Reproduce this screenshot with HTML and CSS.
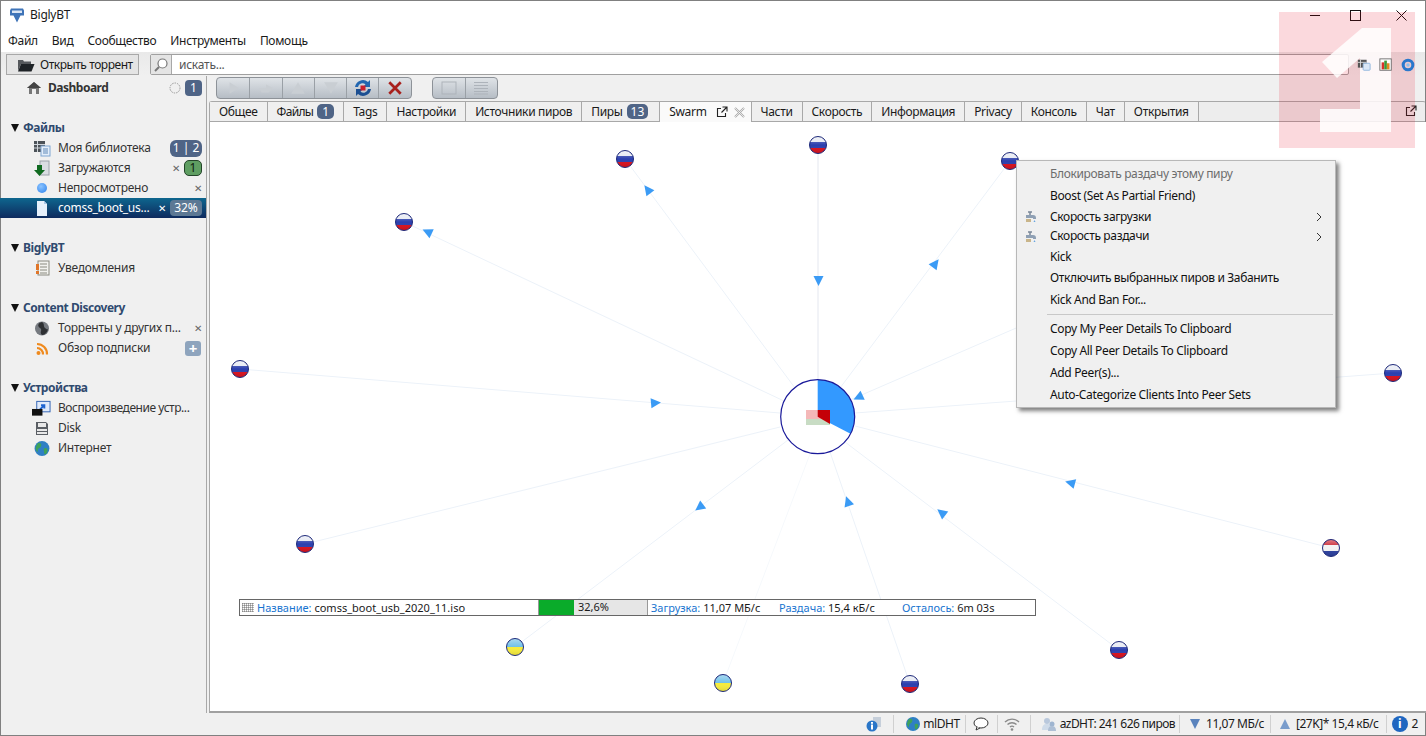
FILE: index.html
```html
<!DOCTYPE html>
<html lang="ru">
<head>
<meta charset="utf-8">
<title>BiglyBT</title>
<link rel="stylesheet" href="styles.css">
</head>
<body>
<svg class="defs" aria-hidden="true">
  <defs>
    <clipPath id="fc"><circle cx="0" cy="0" r="8.5"/></clipPath>
    <linearGradient id="gloss" x1="0" y1="0" x2="0" y2="1"><stop offset="0" stop-color="#fff" stop-opacity=".45"/><stop offset=".5" stop-color="#fff" stop-opacity="0"/><stop offset="1" stop-color="#000" stop-opacity=".12"/></linearGradient>
    <symbol id="ru" viewBox="-10 -10 20 20" overflow="visible">
      <g clip-path="url(#fc)">
        <rect x="-9" y="-9" width="18" height="6" fill="#e4e8f2"/>
        <rect x="-9" y="-3" width="18" height="6" fill="#2b3fae"/>
        <rect x="-9" y="3" width="18" height="6" fill="#d8101c"/>
        <rect x="-9" y="-9" width="18" height="18" fill="url(#gloss)"/>
      </g>
      <circle r="8.5" fill="none" stroke="#1f2a7a" stroke-width="1"/>
    </symbol>
    <symbol id="nl" viewBox="-10 -10 20 20" overflow="visible">
      <g clip-path="url(#fc)">
        <rect x="-9" y="-9" width="18" height="6" fill="#c8202c"/>
        <rect x="-9" y="-3" width="18" height="6" fill="#f2f2f2"/>
        <rect x="-9" y="3" width="18" height="6" fill="#2a3f9e"/>
        <rect x="-9" y="-9" width="18" height="18" fill="url(#gloss)"/>
      </g>
      <circle r="8.5" fill="none" stroke="#1f2a7a" stroke-width="1"/>
    </symbol>
    <symbol id="ua" viewBox="-10 -10 20 20" overflow="visible">
      <g clip-path="url(#fc)">
        <rect x="-9" y="-9" width="18" height="9" fill="#6fc0e8"/>
        <rect x="-9" y="0" width="18" height="9" fill="#f6ec3c"/>
        <rect x="-9" y="-9" width="18" height="18" fill="url(#gloss)"/>
      </g>
      <circle r="8.5" fill="none" stroke="#1f2a7a" stroke-width="1"/>
    </symbol>
    <polygon id="arr" points="0,-6 5,4 -5,4" fill="#3b9bf5"/>
    <symbol id="ext" viewBox="0 0 12 12">
      <path d="M5 2.500H1.500v8h8V7M6.500 1h4.500v4.500M11 1L5.500 6.500" fill="none" stroke="#222" stroke-width="1.100"/>
    </symbol>
    <symbol id="faucet" viewBox="0 0 14 14">
      <path d="M1 6h7a3 3 0 0 1 3 3v1H8V9H1z" fill="#8fa0b4"/>
      <path d="M3 3h4M5 3v3" stroke="#7a8798" stroke-width="1.500"/>
      <path d="M9.500 11l-1 2h2z" fill="#6aa6e0"/>
      <rect x="1" y="10" width="5" height="3" fill="#c9b58a"/>
    </symbol>
    <symbol id="earth" viewBox="0 0 16 16">
      <circle cx="8" cy="8" r="7" fill="#2f7fc4"/>
      <path d="M4 3c3-1 4 1 3 3s-3 1-3 4-2-1-2-2 1-4 2-5zM10 8c2-1 4 0 3 3s-3 3-3 1-1-3 0-4z" fill="#3fa25a"/>
    </symbol>
  </defs>
</svg>

<div class="window">
  <header class="titlebar">
    <svg class="app-logo" viewBox="0 0 16 16"><path d="M2 1h12l1 2v5h-3.500L8 15 4.500 8H1V3z" fill="#3f74b8"/><rect x="3" y="3" width="10" height="2.500" fill="#dbe6f4"/></svg>
    <span class="app-title">BiglyBT</span>
    <div class="winctl">
      <span class="wc-min"></span>
      <span class="wc-max"></span>
      <svg class="wc-close" viewBox="0 0 11 11"><path d="M.5.5l10 10M10.500.5l-10 10" stroke="#111" stroke-width="1"/></svg>
    </div>
  </header>

  <nav class="menubar">
    <span>Файл</span><span>Вид</span><span>Сообщество</span><span>Инструменты</span><span>Помощь</span>
  </nav>

  <div class="toolbar">
    <button class="open-btn">
      <svg viewBox="0 0 18 14" class="folder"><path d="M1 2h5l1 1.500h7V6H4L1 13z" fill="#55585c"/><path d="M4 6h13.500L14.500 13.500H1z" fill="#1e2226"/></svg>
      Открыть торрент
    </button>
    <div class="search">
      <span class="search-ico"><svg viewBox="0 0 16 16"><circle cx="9.500" cy="6.500" r="4.500" fill="#fff" stroke="#777" stroke-width="1.200"/><path d="M6 10l-4 4" stroke="#777" stroke-width="2"/></svg></span>
      <span class="search-text">искать...</span>
    </div>
    <div class="tb-icons">
      <svg viewBox="0 0 16 16"><rect x="1" y="2" width="10" height="9" fill="#555"/><path d="M1 5h10M4 2v9" stroke="#ddd"/><rect x="7" y="6" width="8" height="8" rx="1" fill="#dbe8f6" stroke="#8db4dc"/></svg>
      <svg viewBox="0 0 16 16"><rect x="1" y="1" width="13" height="13" fill="#fff" stroke="#666"/><rect x="3" y="5" width="3" height="8" fill="#d8322a"/><rect x="6" y="3" width="3" height="10" fill="#3a9a3a"/><rect x="9" y="6" width="3" height="7" fill="#e08a20"/></svg>
      <svg viewBox="0 0 16 16"><circle cx="8" cy="8" r="5.500" fill="none" stroke="#2a78cc" stroke-width="3.500"/><circle cx="8" cy="8" r="2" fill="#8cc0ee"/></svg>
    </div>
  </div>

  <div class="content">
    <aside class="sidebar">
      <div class="row dash">
        <svg class="ico-dash" viewBox="0 0 14 14"><path d="M7 1L0 7h2v6h10V7h2z" fill="#777"/><path d="M7 1L0 7h14z" fill="#444"/><rect x="5" y="8" width="4" height="5" fill="#eee"/></svg>
        <span class="dash-label">Dashboard</span>
        <span class="right">
          <svg class="spin" viewBox="0 0 12 12"><circle cx="6" cy="6" r="5" fill="none" stroke="#999" stroke-dasharray="1.500 1"/></svg>
          <span class="badge">1</span>
        </span>
      </div>

      <div class="group">
        <div class="heading"><span class="tri"></span>Файлы</div>
        <div class="row item">
          <svg class="ico" viewBox="0 0 18 17"><rect x="1" y="1" width="11" height="11" fill="#4c5258"/><path d="M1 4.500h11M1 8h11M4.500 1v11" stroke="#cfd4da"/><rect x="8" y="6" width="9" height="10" fill="#e4eefa" stroke="#7ea6d2"/><path d="M10 9h5M10 11h5M10 13h5" stroke="#5f89b8"/></svg>
          <span>Моя библиотека</span>
          <span class="right"><span class="badge wide">1 | 2</span></span>
        </div>
        <div class="row item">
          <svg class="ico" viewBox="0 0 18 17"><rect x="7" y="1" width="9" height="14" fill="#d9dde2" stroke="#9aa2aa"/><path d="M4 5h5v5h3l-5.500 6L1 10h3z" fill="#106a20"/></svg>
          <span>Загружаются</span>
          <span class="right"><span class="x">✕</span><span class="badge green">1</span></span>
        </div>
        <div class="row item">
          <span class="ico-box"><span class="dot"></span></span>
          <span>Непросмотрено</span>
          <span class="right"><span class="x">✕</span></span>
        </div>
        <div class="row item selected">
          <svg class="ico" viewBox="0 0 18 17"><path d="M4 1h7l3 3v12H4z" fill="#e6f0fb"/><path d="M11 1v3h3z" fill="#aac8e8"/></svg>
          <span>comss_boot_us...</span>
          <span class="right"><span class="x">✕</span><span class="badge pct">32%</span></span>
        </div>
      </div>

      <div class="group">
        <div class="heading"><span class="tri"></span>BiglyBT</div>
        <div class="row item">
          <svg class="ico" viewBox="0 0 18 17"><rect x="5" y="1" width="11" height="14" fill="#f2f2ee" stroke="#8a8a80"/><path d="M7 4h7M7 7h7M7 10h7M7 13h7" stroke="#8a8a80"/><rect x="3" y="4" width="3" height="6" fill="#e0762a"/><rect x="3" y="11" width="3" height="3" fill="#e0762a"/></svg>
          <span>Уведомления</span>
        </div>
      </div>

      <div class="group">
        <div class="heading"><span class="tri"></span>Content Discovery</div>
        <div class="row item">
          <svg class="ico" viewBox="0 0 18 17"><circle cx="9" cy="8.500" r="7" fill="#767a80"/><path d="M9 2c3 2 1 4 3 6s3 1 3 1-1 6-6 6c-3-3 1-5-2-7S5 3 9 2z" fill="#2e3033"/></svg>
          <span>Торренты у других п...</span>
          <span class="right"><span class="x">✕</span></span>
        </div>
        <div class="row item">
          <svg class="ico" viewBox="0 0 18 17"><circle cx="5.500" cy="13" r="2" fill="#ef8a1e"/><path d="M4 8a6 6 0 0 1 6 6.500M4 4a10 10 0 0 1 10 10.500" fill="none" stroke="#ef8a1e" stroke-width="2.200"/></svg>
          <span>Обзор подписки</span>
          <span class="right"><span class="plus">+</span></span>
        </div>
      </div>

      <div class="group">
        <div class="heading"><span class="tri"></span>Устройства</div>
        <div class="row item">
          <svg class="ico ico-wide" viewBox="0 0 20 17"><rect x="5" y="1" width="14" height="11" fill="#dfeafb" stroke="#2f62b4"/><path d="M8 10l5-5M9.500 5H13v3.500" stroke="#1d63d0" stroke-width="2" fill="none"/><rect x="0" y="9" width="11" height="7" fill="#111"/></svg>
          <span class="tight">Воспроизведение устр...</span>
        </div>
        <div class="row item">
          <svg class="ico" viewBox="0 0 18 17"><path d="M3 2h10l2 2v11H3z" fill="#5a5e64"/><rect x="5" y="3" width="8" height="4" fill="#e8e8e8"/><rect x="4" y="9" width="10" height="2" fill="#e8e8e8"/><rect x="4" y="12" width="10" height="2" fill="#e8e8e8"/></svg>
          <span>Disk</span>
        </div>
        <div class="row item">
          <svg class="ico" viewBox="0 0 16 16"><use href="#earth"/></svg>
          <span>Интернет</span>
        </div>
      </div>
    </aside>

    <main class="main">
      <div class="actions">
        <div class="btn-group">
          <span class="cell"><svg viewBox="0 0 14 14"><path d="M4 2l8 5-8 5z" fill="#c9ced3"/></svg></span>
          <span class="cell"><svg viewBox="0 0 18 14"><path d="M1 7h8V3l8 4-5 5H4z" fill="#c9ced3"/></svg></span>
          <span class="cell"><svg viewBox="0 0 14 14"><path d="M7 2l6 10H1z" fill="#c9ced3"/></svg></span>
          <span class="cell"><svg viewBox="0 0 14 14"><path d="M7 12l6-10H1z" fill="#c9ced3"/></svg></span>
          <span class="cell"><svg class="big" viewBox="0 0 20 20"><path d="M2 9a8 8 0 0 1 13-5l2-2v7h-7l2.500-2.500A4.500 4.500 0 0 0 5 9z" fill="#2166b0"/><path d="M18 11a8 8 0 0 1-13 5l-2 2v-7h7l-2.500 2.500A4.500 4.500 0 0 0 15 11z" fill="#1c4f92"/><rect x="7.500" y="7.500" width="5" height="5" fill="#c8202c"/></svg></span>
          <span class="cell"><svg viewBox="0 0 14 14"><path d="M2 2l10 10M12 2L2 12" stroke="#a8201c" stroke-width="2.400"/></svg></span>
        </div>
        <div class="btn-group second">
          <span class="cell"><svg viewBox="0 0 16 14"><rect x="1" y="1" width="14" height="12" fill="none" stroke="#adb3ba"/></svg></span>
          <span class="cell"><svg viewBox="0 0 16 14"><path d="M1 1.500h14M1 4.500h14M1 7.500h14M1 10.500h14M1 13h14" stroke="#adb3ba"/></svg></span>
        </div>
      </div>

      <div class="tabs">
        <span class="tab">Общее</span>
        <span class="tab tab-files">Файлы <span class="badge tabbadge">1</span></span>
        <span class="tab">Tags</span>
        <span class="tab">Настройки</span>
        <span class="tab">Источники пиров</span>
        <span class="tab tab-peers">Пиры <span class="badge tabbadge">13</span></span>
        <span class="tab active">Swarm
          <svg class="tab-ext" viewBox="0 0 12 12"><use href="#ext"/></svg>
          <svg class="tab-x" viewBox="0 0 11 11"><path d="M1 1l9 9M10 1l-9 9" stroke="#a8a8a8" stroke-width="2" fill="none"/><path d="M1 1l9 9M10 1l-9 9" stroke="#fff" stroke-width=".7"/></svg>
        </span>
        <span class="tab">Части</span>
        <span class="tab">Скорость</span>
        <span class="tab">Информация</span>
        <span class="tab">Privacy</span>
        <span class="tab">Консоль</span>
        <span class="tab">Чат</span>
        <span class="tab">Открытия</span>
        <svg class="tabs-ext" viewBox="0 0 12 12"><use href="#ext"/></svg>
      </div>

      <div class="canvas">
        <svg class="swarm" viewBox="210 122 1215 589" width="1215" height="589">
          <g stroke="#ecf2f9" stroke-width="1" fill="none">
            <path d="M818 380V145" stroke="#e4e7ef"/>
            <path d="M795 388L625 159"/>
            <path d="M840 388L1010 161"/>
            <path d="M784 401L404 222"/>
            <path d="M780 413L240 369"/>
            <path d="M855 413L1393 373"/>
            <path d="M780 427L305 544"/>
            <path d="M855 426L1331 548"/>
            <path d="M788 440L515 647"/>
            <path d="M810 454L723 683" stroke="#f6f9fc"/>
            <path d="M830 452L910 684"/>
            <path d="M845 442L1119 650"/>
            <path d="M850 400L1030 322"/>
          </g>
          <use href="#arr" transform="translate(648 190) rotate(-37)"/>
          <use href="#arr" transform="translate(818.500 280) rotate(180)"/>
          <use href="#arr" transform="translate(935 264) rotate(37)"/>
          <use href="#arr" transform="translate(428 232) rotate(-65)"/>
          <use href="#arr" transform="translate(655 403) rotate(85)"/>
          <use href="#arr" transform="translate(1071 483) rotate(-75)"/>
          <use href="#arr" transform="translate(700 507) rotate(-127)"/>
          <use href="#arr" transform="translate(848 502) rotate(-19)"/>
          <use href="#arr" transform="translate(942 513) rotate(-52)"/>
          <use href="#arr" transform="translate(859 397) rotate(-115)"/>

          <circle cx="817.700" cy="416.700" r="37" fill="#fff"/>
          <path d="M817.700 416.700V379.700A37 37 0 0 1 850.500 433.800Z" fill="#3399ff"/>
          <circle cx="817.700" cy="416.700" r="37" fill="none" stroke="#1a1a9a" stroke-width="1.200"/>
          <rect x="806" y="410" width="24" height="9" fill="#f4b8b8"/>
          <rect x="806" y="419" width="24" height="6" fill="#c8dcc4"/>
          <path d="M817.700 410H830V424L817.700 416.700Z" fill="#c40008"/>

          <use href="#ru" x="615" y="149" width="20" height="20"/>
          <use href="#ru" x="808" y="135" width="20" height="20"/>
          <use href="#ru" x="1000" y="151" width="20" height="20"/>
          <use href="#ru" x="394" y="212" width="20" height="20"/>
          <use href="#ru" x="230" y="359" width="20" height="20"/>
          <use href="#ru" x="1383" y="363" width="20" height="20"/>
          <use href="#ru" x="295" y="534" width="20" height="20"/>
          <use href="#nl" x="1321" y="538" width="20" height="20"/>
          <use href="#ua" x="505" y="637" width="20" height="20"/>
          <use href="#ua" x="713" y="673" width="20" height="20"/>
          <use href="#ru" x="900" y="674" width="20" height="20"/>
          <use href="#ru" x="1109" y="640" width="20" height="20"/>
        </svg>

        <div class="infobar">
          <span class="grip"></span>
          <span class="ib-name"><b>Название:</b> comss_boot_usb_2020_11.iso</span>
          <span class="ib-prog"><span class="ib-fill"></span><span class="ib-pct">32,6%</span></span>
          <span class="ib-down"><b>Загрузка:</b> 11,07 МБ/с</span>
          <span class="ib-up"><b>Раздача:</b> 15,4 кБ/с</span>
          <span class="ib-eta"><b>Осталось:</b> 6m 03s</span>
        </div>
      </div>
    </main>
  </div>

  <footer class="statusbar">
    <svg class="st-ico" viewBox="0 0 16 16"><rect x="7" y="1" width="8" height="10" fill="#c6cfda"/><circle cx="6" cy="10" r="5.500" fill="#2a76c8"/><rect x="5" y="8.500" width="2" height="5" fill="#fff"/><rect x="5" y="6" width="2" height="1.800" fill="#fff"/></svg>
    <span class="st-sep s1"></span>
    <svg class="st-ico" viewBox="0 0 16 16"><use href="#earth"/></svg>
    <span class="st-text mi-dht">mlDHT</span>
    <span class="st-sep s2"></span>
    <svg class="st-ico" viewBox="0 0 16 16"><ellipse cx="8" cy="7" rx="7" ry="5" fill="#fff" stroke="#333"/><path d="M4 11l-1 3 4-2" fill="#fff" stroke="#333"/></svg>
    <span class="st-sep s3"></span>
    <svg class="st-ico" viewBox="0 0 16 16"><path d="M1 6a10 10 0 0 1 14 0M3.500 8.500a6.500 6.500 0 0 1 9 0M6 11a3 3 0 0 1 4 0" fill="none" stroke="#8a8a8a" stroke-width="1.400"/><circle cx="8" cy="13.500" r="1.300" fill="#8a8a8a"/></svg>
    <span class="st-sep s4"></span>
    <svg class="st-ico" viewBox="0 0 16 16"><circle cx="6" cy="5" r="3" fill="#b9c8dc"/><path d="M1 14c0-5 2-6 5-6s5 1 5 6z" fill="#cfdbe9"/><circle cx="11" cy="8" r="2.500" fill="#9fb5d0"/><path d="M7 15c0-4 2-5 4-5s4 1 4 5z" fill="#aebfd5"/></svg>
    <span class="st-text az">azDHT: 241 626 пиров</span>
    <span class="st-sep s5"></span>
    <svg class="st-tri" viewBox="0 0 10 10"><path d="M0 0h10L5 10z" fill="#5a83bd"/></svg>
    <span class="st-text">11,07 МБ/с</span>
    <span class="st-sep s6"></span>
    <svg class="st-tri" viewBox="0 0 10 10"><path d="M0 10h10L5 0z" fill="#7a9dcc"/></svg>
    <span class="st-text">[27K]* 15,4 кБ/с</span>
    <span class="st-sep s7"></span>
    <span class="st-info">i</span>
    <span class="st-text st-count">2</span>
  </footer>

  <div class="ctx">
    <div class="mi dis">Блокировать раздачу этому пиру</div>
    <div class="mi">Boost (Set As Partial Friend)</div>
    <div class="mi thin"><svg class="mi-ico" viewBox="0 0 14 14"><use href="#faucet"/></svg>Скорость загрузки<svg class="chev" viewBox="0 0 6 10"><path d="M1 1l4 4-4 4" fill="none" stroke="#333"/></svg></div>
    <div class="mi thin"><svg class="mi-ico" viewBox="0 0 14 14"><use href="#faucet"/></svg>Скорость раздачи<svg class="chev" viewBox="0 0 6 10"><path d="M1 1l4 4-4 4" fill="none" stroke="#333"/></svg></div>
    <div class="mi kick">Kick</div>
    <div class="mi">Отключить выбранных пиров и Забанить</div>
    <div class="mi">Kick And Ban For...</div>
    <div class="sep"></div>
    <div class="mi">Copy My Peer Details To Clipboard</div>
    <div class="mi">Copy All Peer Details To Clipboard</div>
    <div class="mi">Add Peer(s)...</div>
    <div class="mi">Auto-Categorize Clients Into Peer Sets</div>
  </div>

  <svg class="watermark" viewBox="0 0 136 136" aria-hidden="true">
    <rect width="136" height="136" fill="#e6001a" fill-opacity=".15"/>
    <path d="M83 16h29v104H41V97h40V46L58 66 43 50z" fill="#fff" fill-opacity=".85"/>
  </svg>
</div>
</body>
</html>
```

FILE: styles.css
```css
* { box-sizing: border-box; }
html, body { margin: 0; padding: 0; height: 100%; overflow: hidden; background: #fff; }
body { font: 12px/16px "Noto Sans", "Open Sans", sans-serif; letter-spacing: -0.25px; color: #1a1a1a; }
.defs { position: absolute; width: 0; height: 0; }

.window { position: relative; width: 1426px; height: 736px; display: flex; flex-direction: column; overflow: hidden; outline: 1px solid #808080; outline-offset: -1px; }

.titlebar { height: 30px; flex: none; display: flex; align-items: center; background: #fff; padding-left: 9px; }
.app-logo { width: 16px; height: 17px; }
.app-title { margin-left: 5px; }
.winctl { margin-left: auto; display: flex; align-items: center; padding-right: 19px; }
.wc-min { width: 10px; height: 1px; background: #111; margin-right: 30px; }
.wc-max { width: 11px; height: 11px; border: 1px solid #111; margin-right: 35px; }
.wc-close { width: 11px; height: 11px; }

.menubar { height: 22px; flex: none; display: flex; align-items: center; gap: 14px; padding-left: 8px; background: #fff; letter-spacing: -0.3px; }

.toolbar { height: 24px; flex: none; display: flex; align-items: stretch; padding: 2px 0 1px 6px; background: linear-gradient(#e9e9e9, #f0f0f0); }
.open-btn { width: 133px; display: flex; align-items: center; gap: 5px; padding: 0 0 0 10px; font: inherit; letter-spacing: -0.45px; color: #1a1a1a; background: #e4e4e4; border: 1px solid #a8a8a8; }
.folder { width: 18px; height: 14px; }
.search { margin-left: 11px; width: 1199px; display: flex; background: #fff; border: 1px solid #a0a0a0; border-radius: 2px; }
.search-ico { width: 21px; display: flex; align-items: center; justify-content: center; background: #e4e4e4; border-right: 1px solid #a8a8a8; }
.search-ico svg { width: 16px; height: 16px; }
.search-text { padding-left: 7px; color: #555; line-height: 20px; }
.tb-icons { display: flex; align-items: center; gap: 8px; margin-left: 8px; position: relative; z-index: 2; }
.tb-icons svg { width: 14px; height: 14px; }

.content { flex: 1; min-height: 0; display: flex; background: #f0f0f0; }

.sidebar { width: 207px; flex: none; padding-top: 2px; background: #f0f0f0; border-right: 1px solid #a8a8a8; color: #333; }
.row { height: 20px; display: flex; align-items: center; position: relative; }
.dash { padding-left: 27px; font-weight: 700; letter-spacing: -0.5px; }
.ico-dash { width: 14px; height: 14px; margin-right: 7px; }
.dash-label { color: #333; }
.right { margin-left: auto; display: flex; align-items: center; gap: 4px; padding-right: 4px; }
.spin { width: 12px; height: 12px; }
.badge { display: inline-flex; align-items: center; justify-content: center; min-width: 17px; height: 16px; padding: 0 4px; border-radius: 4px; background: #4f6486; color: #fff; letter-spacing: 0; font-weight: 400; white-space: nowrap; }
.badge.wide { width: 32px; height: 17px; padding: 0; border-radius: 6px; }
.badge.green { background: #5f9e62; border: 1px solid #24452a; color: #102010; width: 18px; border-radius: 5px; }
.badge.pct { width: 32px; padding: 0; background: #5c7894; border-radius: 4px; }

.group { margin-top: 20px; }
.heading { height: 20px; display: flex; align-items: center; padding-left: 11px; font-weight: 700; color: #2f4a6f; letter-spacing: -0.45px; }
.tri { width: 0; height: 0; margin-right: 4px; border-left: 4px solid transparent; border-right: 4px solid transparent; border-top: 8px solid #111; }
.item { padding-left: 33px; }
.ico { width: 18px; height: 17px; margin-right: 7px; flex: none; }
.ico-wide { width: 19px; margin-left: -1px; }
.tight { letter-spacing: -0.45px; }
.ico-box { width: 18px; height: 17px; margin-right: 7px; display: flex; align-items: center; justify-content: center; flex: none; }
.dot { width: 10px; height: 10px; border-radius: 50%; background: radial-gradient(circle at 40% 35%, #8cc4ff, #2a80ec); }
.x { color: #666; font-size: 10px; line-height: 10px; }
.selected { background: linear-gradient(#0e668e, #0e2a5e); color: #fff; }
.selected .x { color: #fff; }
.plus { width: 16px; height: 15px; margin-right: 1px; display: flex; align-items: center; justify-content: center; border-radius: 3px; background: #8ea4bd; color: #fff; font-weight: 700; font-size: 15px; }

.main { flex: 1; min-width: 0; display: flex; flex-direction: column; padding-left: 2px; }
.actions { height: 25px; flex: none; display: flex; align-items: flex-start; padding: 1px 0 0 7px; gap: 20px; }
.btn-group { display: flex; height: 22px; border: 1px solid #8d9298; border-radius: 4px; background: linear-gradient(#dfe3e7, #b6bdc5); }
.cell { width: 32.300px; display: flex; align-items: center; justify-content: center; border-left: 1px solid #9aa0a6; }
.cell:first-child { border-left: 0; }
.cell svg { width: 16px; height: 16px; }
.cell svg.big { width: 20px; height: 20px; }
.second .cell { width: 32px; }

.tabs { height: 21px; flex: none; display: flex; align-items: stretch; letter-spacing: -0.34px; background: #ededed; border-top: 1px solid #a8a8a8; border-left: 1px solid #a8a8a8; border-bottom: 1px solid #a8a8a8; border-radius: 3px 3px 0 0; }
.tab { display: flex; align-items: center; gap: 4px; padding: 0 9px; border-right: 1px solid #a8a8a8; white-space: nowrap; background: #efefef; }
.tab-files { letter-spacing: -0.7px; }
.tab-peers { padding-right: 11px; }
.tabbadge { height: 15px; border-radius: 5px; }
.tab.active { background: #fafafa; margin-bottom: -1px; }
.tab-ext { width: 12px; height: 12px; margin-left: 5px; }
.tab-x { width: 11px; height: 11px; margin: 0 -3px 0 2px; }
.tabs-ext { width: 12px; height: 12px; margin: 3px 9px 0 auto; }

.canvas { flex: 1; min-height: 0; position: relative; background: #fff; border-left: 1px solid #a8a8a8; border-bottom: 2px solid #a0a0a0; }
.swarm { position: absolute; left: 0; top: 0; display: block; }

.infobar { position: absolute; left: 29px; top: 477px; width: 797px; height: 17px; display: flex; align-items: center; background: #fff; border: 1px solid #666; font-size: 11px; letter-spacing: 0; }
.infobar b { font-weight: 400; color: #1874d0; }
.grip { width: 12px; height: 9px; margin: 0 3px 0 2px; flex: none; background: repeating-linear-gradient(90deg, #999 0 1px, transparent 1px 2px), repeating-linear-gradient(#999 0 1px, transparent 1px 2px); background-blend-mode: multiply; opacity: .7; }
.ib-name { width: 281px; flex: none; white-space: nowrap; }
.ib-prog { width: 110px; height: 15px; flex: none; position: relative; display: flex; background: #e6e6e6; border-left: 1px solid #999; border-right: 1px solid #999; }
.ib-fill { width: 35px; background: #0aab2a; }
.ib-pct { margin-left: 4px; line-height: 13px; }
.ib-down { width: 131px; flex: none; padding-left: 3px; white-space: nowrap; }
.ib-up { width: 123px; flex: none; white-space: nowrap; }
.ib-eta { white-space: nowrap; }

.statusbar { height: 23px; flex: none; display: flex; align-items: center; justify-content: flex-end; padding-right: 8px; letter-spacing: -0.45px; background: #f0f0f0; border-bottom: 1px solid #888; }
.st-ico { width: 16px; height: 16px; flex: none; }
.st-tri { width: 10px; height: 10px; margin-right: 6px; flex: none; }
.st-text { white-space: nowrap; }
.mi-dht { margin-left: 2px; }
.az { margin-left: 3px; letter-spacing: -0.55px; }
.st-count { margin-left: 4px; }
.st-sep { width: 1px; height: 18px; background: #d0d0d0; flex: none; }
.s1 { margin: 0 11px; }
.s2 { margin: 0 7px 0 5px; }
.s3 { margin: 0 6px 0 8px; }
.s4 { margin: 0 10px; }
.s5 { margin: 0 10px 0 4px; }
.s6 { margin: 0 9px 0 6px; }
.s7 { margin: 0 5px 0 7px; }
.st-info { width: 16px; height: 16px; border-radius: 50%; display: flex; align-items: center; justify-content: center; background: #1f66c0; color: #fff; font-weight: 700; flex: none; }

.ctx { position: absolute; left: 1016px; top: 160px; width: 320px; height: 248px; padding: 2px 0; letter-spacing: -0.35px; background: #f0f0f0; border: 1px solid #b8b8b8; box-shadow: 3px 3px 4px rgba(0, 0, 0, .5); }
.mi { height: 22px; display: flex; align-items: center; padding-left: 33px; position: relative; color: #111; }
.mi.dis { color: #6d6d6d; }
.mi.thin { height: 19.500px; }
.mi.kick { height: 21px; }
.mi-ico { position: absolute; left: 8px; top: 2px; width: 14px; height: 14px; }
.chev { position: absolute; right: 13px; top: 5px; width: 6px; height: 10px; }
.sep { height: 1px; margin: 3px 2px 3px 30px; background: #c8c8c8; }

.watermark { position: absolute; left: 1279px; top: 12px; width: 136px; height: 136px; pointer-events: none; z-index: 1; }
```
